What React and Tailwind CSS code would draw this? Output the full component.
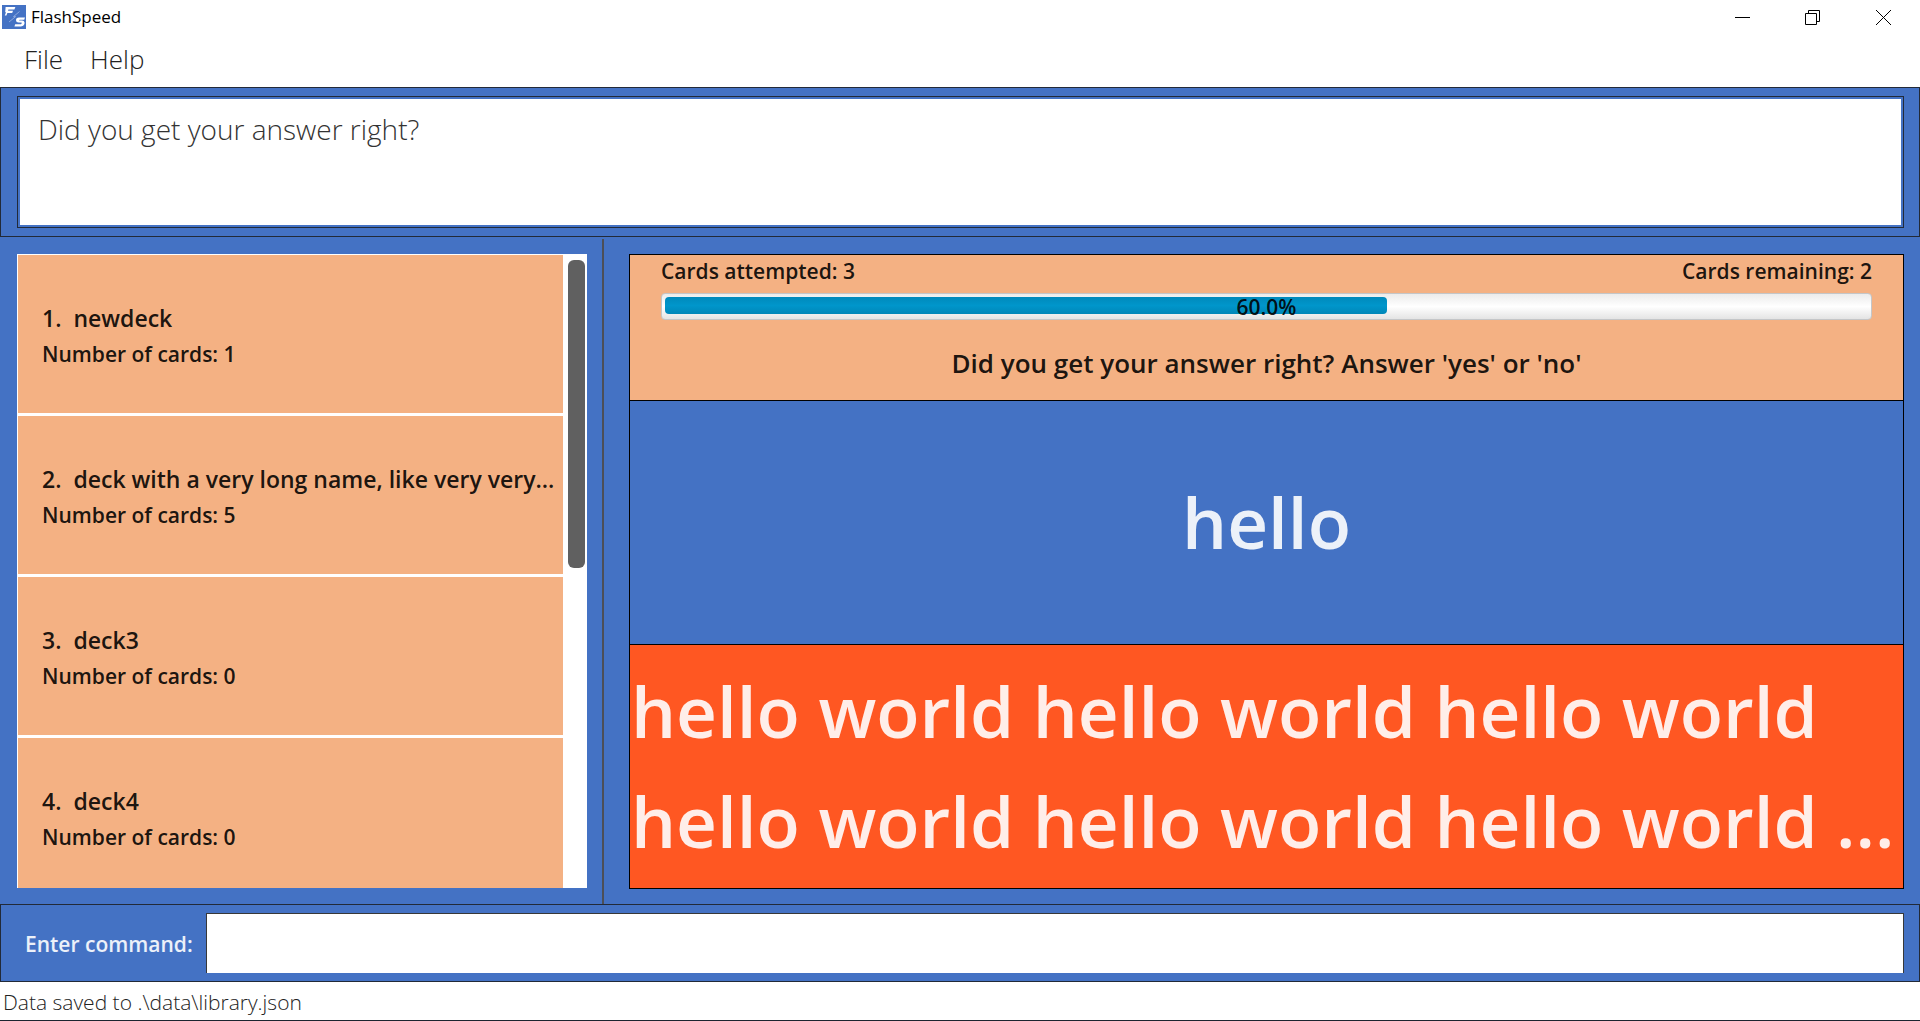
import React from "react";

const decks = [
  { name: "newdeck", count: 1 },
  { name: "deck with a very long name, like very very...", count: 5 },
  { name: "deck3", count: 0 },
  { name: "deck4", count: 0 },
];

const session = { attempted: 3, remaining: 2 };

function AppLogo() {
  return (
    <svg className="h-6 w-6" viewBox="0 0 24 24" aria-hidden="true">
      <rect width="24" height="24" fill="#4472c4" />
      <path d="M3.6 2H13.4L12.4 4.6H6.4L6 5.8H11L10.2 8H5.4L4.4 10.6H2.8L4 7.2H3.2Z" fill="#fff" />
      <path d="M17.5 6.5L11.5 11.6H13.6L7 17" fill="none" stroke="#9db6e4" strokeWidth="0.8" />
      <path
        d="M23 12.6H17Q14 12.8 14 15.2Q14 17.4 16.6 17.4H19.6Q20.2 18.6 18.8 19.2H13.2L12.4 21.4H19Q22.6 20.8 22.6 17.8Q22.4 15.6 20 15.6H17.2Q16.8 14.8 17.8 14.8H22.2Z"
        fill="#fff"
      />
    </svg>
  );
}

function TitleBar() {
  return (
    <header className="flex h-[34px] shrink-0 items-center justify-between bg-white pr-px pl-0.5">
      <div className="flex items-center gap-[5px]">
        <AppLogo />
        <h1 className="text-[17px] leading-6 text-black">FlashSpeed</h1>
      </div>
      <div className="flex h-full">
        <button aria-label="Minimize" className="grid w-[70px] place-items-center">
          <svg className="h-[15px] w-[15px]" viewBox="0 0 15 15" stroke="#000" fill="none">
            <path d="M0 7.5H15" />
          </svg>
        </button>
        <button aria-label="Restore" className="grid w-[70px] place-items-center">
          <svg className="h-[15px] w-[15px]" viewBox="0 0 15 15" stroke="#000" fill="none">
            <path d="M0.5 3.5H11.5V14.5H0.5ZM3.5 3.5V0.5H14.5V11.5H11.5" />
          </svg>
        </button>
        <button aria-label="Close" className="grid w-[72px] place-items-center">
          <svg className="h-[15px] w-[15px]" viewBox="0 0 15 15" stroke="#000" fill="none">
            <path d="M0 0L15 15M15 0L0 15" />
          </svg>
        </button>
      </div>
    </header>
  );
}

function MenuBar() {
  return (
    <nav className="flex h-[53px] shrink-0 items-center gap-[27px] bg-white pb-[3px] pl-6 text-[26px] leading-8 font-light text-[#222]">
      <button>File</button>
      <button>Help</button>
    </nav>
  );
}

function DeckList() {
  return (
    <section className="flex w-[604px] shrink-0 flex-col border-r-2 border-[#4c4f58] pt-[15px] pr-[15px] pb-4 pl-[17px]">
      <div className="flex min-h-0 flex-1 bg-white pt-px pl-px">
        <ol className="min-w-0 flex-1 overflow-hidden">
          {decks.map((deck, i) => (
            <li
              key={deck.name}
              className="mb-[3px] flex h-[158px] flex-col justify-center bg-[#f4b183] pt-1 pl-6 leading-9 font-semibold text-black/90"
            >
              <div className="flex gap-3 text-[23px] whitespace-nowrap">
                <span>{i + 1}.</span>
                <span>{deck.name}</span>
              </div>
              <div className="text-[21px]">Number of cards: {deck.count}</div>
            </li>
          ))}
        </ol>
        <div className="w-6 py-[5px] pr-0.5 pl-[5px]">
          <div className="h-[49.5%] rounded-md bg-[#606060]" />
        </div>
      </div>
    </section>
  );
}

function ProgressBar({ value }) {
  return (
    <div
      role="progressbar"
      aria-label="Session progress"
      aria-valuenow={value}
      className="relative h-[27px] rounded border border-[#c4c6c8] bg-linear-to-b from-[#ececec] via-white to-[#e4e4e4] p-[3px] pb-[5px]"
    >
      <div
        className="h-full rounded-sm bg-linear-to-b from-[#0089bb] via-[#0096cb] to-[#0087b8]"
        style={{ width: `${value}%` }}
      />
      <span className="absolute inset-0 grid place-items-center text-[21px] leading-6 font-semibold text-black/90">
        {value.toFixed(1)}%
      </span>
    </div>
  );
}

function SessionPanel() {
  const total = session.attempted + session.remaining;
  return (
    <section className="flex min-w-0 flex-1 py-[15px] pr-4 pl-[25px]">
      <div className="flex min-w-0 flex-1 flex-col border border-black">
        <div className="h-[146px] shrink-0 border-b border-black bg-[#f4b183] px-[31px] font-semibold text-black/90">
          <div className="flex h-[38px] justify-between text-[21px] leading-8">
            <span>Cards attempted: {session.attempted}</span>
            <span>Cards remaining: {session.remaining}</span>
          </div>
          <ProgressBar value={(session.attempted / total) * 100} />
          <p className="mt-[25px] text-center text-[26px] leading-9">
            Did you get your answer right? Answer 'yes' or 'no'
          </p>
        </div>
        <div className="flex min-h-0 flex-1 items-center justify-center border-b border-black pb-0.5 text-[71px] leading-[110px] font-semibold text-white/90">
          hello
        </div>
        <div className="flex min-h-0 flex-1 items-center bg-[#ff5722] px-px pb-0.5 text-[71px] leading-[110px] font-semibold whitespace-nowrap text-white/90">
          <p>
            hello world hello world hello world
            <br />
            hello world hello world hello world ...
          </p>
        </div>
      </div>
    </section>
  );
}

export default function App() {
  return (
    <div className="flex h-screen flex-col overflow-hidden border-b border-[#1b2430] bg-white font-['Open_Sans','Noto_Sans',sans-serif]">
      <TitleBar />
      <MenuBar />
      <div className="flex h-[150px] shrink-0 border border-[#222a38] bg-[#4472c4] pt-2 pr-[15px] pb-2 pl-4">
        <textarea
          readOnly
          aria-label="Result"
          value="Did you get your answer right?"
          className="flex-1 resize-none border border-[#222a38] bg-white px-5 py-3 text-[28px] leading-10 font-light text-[#333] outline-2 -outline-offset-3 outline-[#4472c4]"
        />
      </div>
      <main className="flex min-h-0 flex-1 bg-[#4472c4] pt-0.5">
        <DeckList />
        <SessionPanel />
      </main>
      <form className="flex h-[78px] shrink-0 items-center border border-[#222a38] bg-[#4472c4] pr-[15px] pl-6">
        <label htmlFor="command" className="w-[181px] pt-0.5 text-[21px] leading-8 font-semibold text-white/90">
          Enter command:
        </label>
        <input
          id="command"
          className="h-[60px] min-w-0 flex-1 border border-b-0 border-[#383838] bg-white px-3 text-[21px] outline-none"
        />
      </form>
      <footer className="h-[38px] shrink-0 bg-white pl-[3px] text-[21px] leading-10 font-light text-[#222]">
        Data saved to .\data\library.json
      </footer>
    </div>
  );
}
